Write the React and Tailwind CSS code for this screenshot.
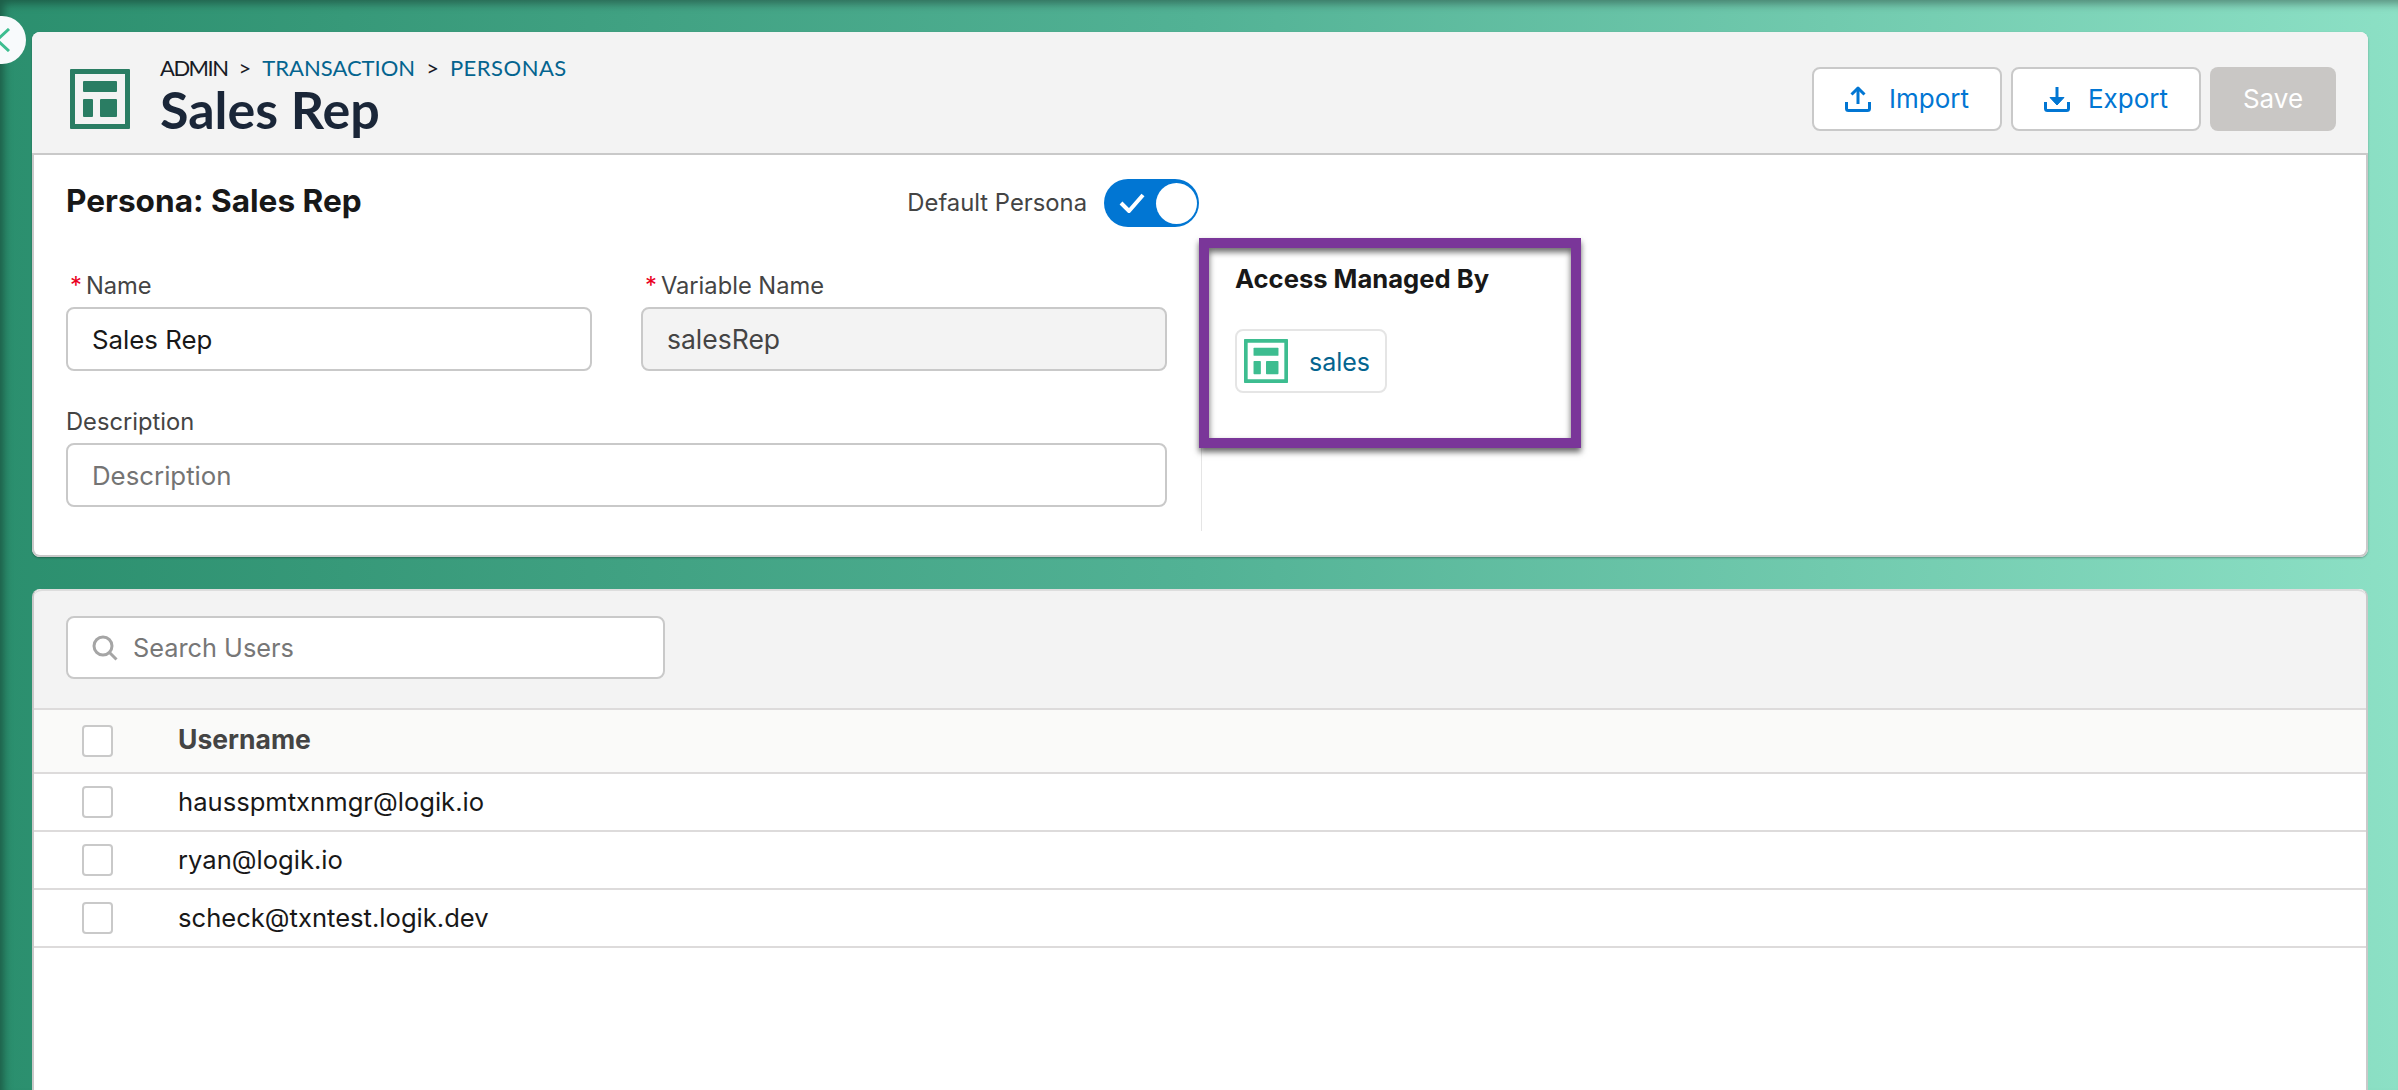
const body = { fontFamily: "Inter, 'Liberation Sans', sans-serif" };
const head = { fontFamily: "Lato, 'Open Sans', sans-serif" };

function LayoutIcon({ className }) {
  return (
    <svg viewBox="0 0 60 60" className={className}>
      <path fillRule="evenodd" fill="currentColor" d="M1 0h58a1 1 0 0 1 1 1v58a1 1 0 0 1-1 1H1a1 1 0 0 1-1-1V1a1 1 0 0 1 1-1zM5 5v50h50V5z" />
      <rect x="13" y="12" width="34" height="11" rx="1" fill="currentColor" />
      <rect x="13" y="30" width="10" height="18" rx="1" fill="currentColor" />
      <rect x="30" y="30" width="17" height="18" rx="1" fill="currentColor" />
    </svg>
  );
}

function UploadIcon() {
  return (
    <svg viewBox="0 0 26 26" className="w-[26px] h-[26px]" fill="none" stroke="currentColor" strokeWidth="3">
      <path d="M13 18V2.5" />
      <path d="M6.5 8.5L13 2.2l6.5 6.3" strokeLinejoin="round" />
      <path d="M1.5 16v6.5a2 2 0 0 0 2 2h19a2 2 0 0 0 2-2V16" />
    </svg>
  );
}

function DownloadIcon() {
  return (
    <svg viewBox="0 0 26 26" className="w-[26px] h-[26px]" fill="none" stroke="currentColor" strokeWidth="3">
      <path d="M13 1v14" />
      <path d="M6 11.5h14L13 19z" fill="currentColor" strokeWidth="1" strokeLinejoin="round" />
      <path d="M1.5 16v6.5a2 2 0 0 0 2 2h19a2 2 0 0 0 2-2V16" />
    </svg>
  );
}

function Button({ icon, label, className }) {
  return (
    <button className={"flex items-center justify-center h-16 rounded-lg text-[26px] border-2 border-[#c9c9c9] bg-white text-[#0176d3] gap-[18px] " + className}>
      {icon}
      {label}
    </button>
  );
}

function Field({ label, required, children }) {
  return (
    <div>
      <div className="flex items-center h-[30px] mb-1.5 text-[23.7px] text-[#444444]">
        {required && <span className="text-[#ea001e] ml-1 mr-1">*</span>}
        {label}
      </div>
      {children}
    </div>
  );
}

function Checkbox() {
  return <span className="block w-[31px] h-8 rounded bg-white border-2 border-[#c9c9c9]" />;
}

const users = ["hausspmtxnmgr@logik.io", "ryan@logik.io", "scheck@txntest.logik.dev"];

export default function App() {
  return (
    <div style={body} className="relative h-[1090px] overflow-hidden bg-linear-to-r from-[#2b8f6e] via-[#52b295] to-[#8ce0c5] pt-8 pl-8 pr-[30px]">
      <div className="absolute inset-0 shadow-[inset_6px_6px_8px_-2px_rgba(0,0,0,0.35)]" />
      <div className="absolute -left-[22px] top-4 z-10 flex items-center justify-center w-12 h-12 rounded-full bg-[#f8fafc]">
        <svg viewBox="0 0 24 24" className="w-6 h-6 ml-2 text-[#3dbd90]" fill="none" stroke="currentColor" strokeWidth="3">
          <path d="M15 1L3 12l12 11" />
        </svg>
      </div>

      <div className="relative rounded-lg bg-white shadow-[0_1px_2px_rgba(0,0,0,0.3)]">
        <div className="flex items-center justify-between h-[123px] pt-3 pl-[38px] pr-8 rounded-t-lg bg-[#f3f3f3] border-b-2 border-[#c9c9c9]">
          <div className="flex items-center gap-[30px]">
            <LayoutIcon className="w-[60px] h-[60px] text-[#2a7d63]" />
            <div style={head} className="-mt-[7px]">
              <div className="flex items-center text-[22px] leading-7">
                <span className="text-[#181b25] tracking-[-1.5px]">ADMIN</span>
                <span className="text-[#181b25] mx-[11px]">&gt;</span>
                <span className="text-[#04648f]">TRANSACTION</span>
                <span className="text-[#181b25] mx-[11px]">&gt;</span>
                <span className="text-[#04648f] tracking-[0.5px]">PERSONAS</span>
              </div>
              <div className="text-[52px] leading-[55px] font-bold text-[#1a2638]">Sales Rep</div>
            </div>
          </div>
          <div className="flex items-center gap-[9px]">
            <Button className="w-[190px]" icon={<UploadIcon />} label="Import" />
            <Button className="w-[190px]" icon={<DownloadIcon />} label="Export" />
            <button className="h-16 w-[126px] rounded-lg bg-[#c9c7c5] text-white text-[26px]">Save</button>
          </div>
        </div>

        <div className="flex pl-8 pt-6 pb-6 border-x-2 border-b-2 border-[#c9c9c9] rounded-b-lg">
          <div className="w-[1135px]">
            <div className="flex items-start justify-between pr-0.5">
              <h2 className="mt-1 text-[31.6px] leading-9 font-bold text-[#181818]">Persona: Sales Rep</h2>
              <div className="flex items-center gap-[17px]">
                <span className="text-[23.8px] text-[#444444]">Default Persona</span>
                <div className="flex items-center justify-between w-[95px] h-12 rounded-full bg-[#0176d3] pl-[15px] pr-0.5">
                  <svg viewBox="0 0 26 20" className="w-[26px] h-5 text-white" fill="none" stroke="currentColor" strokeWidth="4">
                    <path d="M2 10l8 8L24 2" />
                  </svg>
                  <span className="w-[41px] h-[41px] rounded-full bg-white" />
                </div>
              </div>
            </div>
            <div className="mt-11 pr-[34px]">
              <div className="grid grid-cols-2 gap-[49px]">
                <Field label="Name" required>
                  <div className="flex items-center h-16 pt-0.5 rounded-lg border-2 border-[#c9c9c9] px-6 text-[25.8px] text-[#181818]">Sales Rep</div>
                </Field>
                <Field label="Variable Name" required>
                  <div className="flex items-center h-16 pt-0.5 rounded-lg border-2 border-[#c9c9c9] bg-[#f3f3f3] px-6 text-[26.5px] text-[#444444]">salesRep</div>
                </Field>
              </div>
              <div className="mt-9 mb-6">
                <Field label="Description">
                  <div className="flex items-center h-16 pt-0.5 rounded-lg border-2 border-[#c9c9c9] px-6 text-[25.8px] text-[#747474]">Description</div>
                </Field>
              </div>
            </div>
          </div>

          <div className="relative mt-[61px] flex-1 border-l border-[#e5e5e5] pl-[33px] pt-6">
            <div className="absolute -left-[3px] -top-[2px] w-[382px] h-[210px] border-[10px] border-[#7a3699] shadow-[0_4px_6px_rgba(0,0,0,0.6),inset_0_4px_6px_rgba(0,0,0,0.6)]" />
            <div className="text-[25.6px] leading-[30px] font-bold text-[#181818]">Access Managed By</div>
            <div className="flex items-center gap-[21px] w-[152px] h-16 mt-[35px] pl-[7px] rounded-lg border-2 border-[#e5e5e5]">
              <LayoutIcon className="w-[44px] h-[44px] text-[#3dbd90]" />
              <span className="pt-[3px] text-[25px] text-[#04648f]">sales</span>
            </div>
          </div>
        </div>
      </div>

      <div className="relative mt-8 h-[600px] rounded-t-lg bg-white border-x-2 border-[#c9c9c9]">
        <div className="h-[119px] pt-[25px] pl-8 rounded-t-lg bg-[#f3f3f3] border-t-2 border-[#dddddd]">
          <div className="flex items-center w-[599px] h-[63px] pl-6 rounded-lg bg-white border-2 border-[#c9c9c9] text-[25.3px] text-[#777777] gap-[15px]">
            <svg viewBox="0 0 26 26" className="w-[26px] h-[26px] text-[#a5a5a5]" fill="none" stroke="currentColor" strokeWidth="3">
              <circle cx="11" cy="11" r="9" />
              <path d="M17.5 17.5l7 7" />
            </svg>
            Search Users
          </div>
        </div>
        <div className="flex items-center h-[66px] pl-12 bg-[#fafaf9] border-y-2 border-[#dddbdb]">
          <Checkbox />
          <span className="ml-[65px] pb-0.5 text-[26.5px] font-bold text-[#444444]">Username</span>
        </div>
        {users.map((user) => (
          <div key={user} className="flex items-center h-[58px] pl-12 border-b-2 border-[#dddbdb]">
            <Checkbox />
            <span className="ml-[65px] text-[25.6px] text-[#181818]">{user}</span>
          </div>
        ))}
      </div>
    </div>
  );
}
